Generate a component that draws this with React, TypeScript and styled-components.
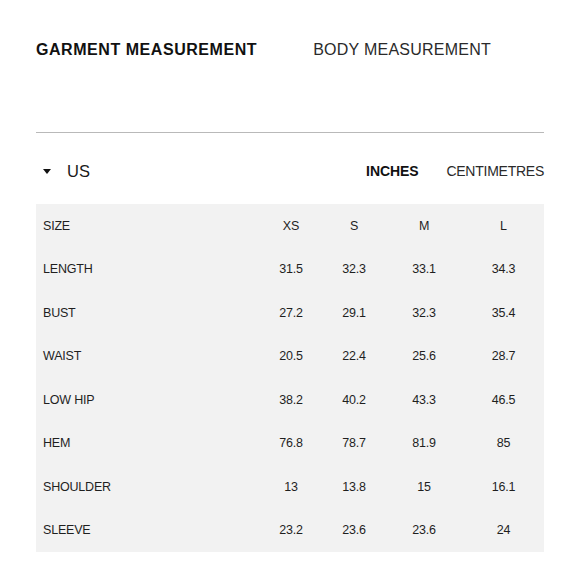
import { Fragment } from "react";
import styled, { createGlobalStyle } from "styled-components";

const GlobalStyle = createGlobalStyle`
  body {
    margin: 0;
    background: #ffffff;
    font-family: "Liberation Sans", Arial, sans-serif;
    color: #111111;
  }
`;

// size chart data (inches)
const SIZES = ["XS", "S", "M", "L"];

const ROWS: { label: string; values: string[] }[] = [
  { label: "LENGTH", values: ["31.5", "32.3", "33.1", "34.3"] },
  { label: "BUST", values: ["27.2", "29.1", "32.3", "35.4"] },
  { label: "WAIST", values: ["20.5", "22.4", "25.6", "28.7"] },
  { label: "LOW HIP", values: ["38.2", "40.2", "43.3", "46.5"] },
  { label: "HEM", values: ["76.8", "78.7", "81.9", "85"] },
  { label: "SHOULDER", values: ["13", "13.8", "15", "16.1"] },
  { label: "SLEEVE", values: ["23.2", "23.6", "23.6", "24"] },
];

interface ActiveProps {
  $active?: boolean;
}

const Page = styled.div`
  width: 508px;
  padding: 40px 36px 0;
`;

const Tabs = styled.div`
  display: flex;
  gap: 56px;
  height: 20px;
  align-items: center;
  padding-bottom: 72px;
  border-bottom: 1.5px solid #b9b9b9;
`;

const Tab = styled.span<ActiveProps>`
  font-size: 16px;
  line-height: 20px;
  font-weight: ${(p) => (p.$active ? 700 : 400)};
  letter-spacing: ${(p) => (p.$active ? "0.55px" : "0.25px")};
  color: ${(p) => (p.$active ? "#111" : "#2a2a2a")};
  white-space: nowrap;
`;

const UnitBar = styled.div`
  display: flex;
  align-items: center;
  justify-content: space-between;
  height: 20px;
  margin-top: 28px;
  margin-bottom: 23px;
`;

const Region = styled.div`
  display: flex;
  align-items: center;
  padding-left: 7px;
  gap: 16px;
`;

const Caret = styled.span`
  width: 0;
  height: 0;
  border-left: 4px solid transparent;
  border-right: 4px solid transparent;
  border-top: 5px solid #111;
`;

const RegionName = styled.span`
  font-size: 16.5px;
  color: #1a1a1a;
`;

const Units = styled.div`
  display: flex;
  gap: 28px;
`;

const Unit = styled.span<ActiveProps>`
  font-size: 14px;
  font-weight: ${(p) => (p.$active ? 700 : 400)};
  color: ${(p) => (p.$active ? "#111" : "#2a2a2a")};
  letter-spacing: ${(p) => (p.$active ? "-0.1px" : "-0.25px")};
`;

const Table = styled.div`
  background: #f2f2f2;
  display: grid;
  grid-template-columns: 223px 64px 62px 78px 81px;
  grid-auto-rows: 43.5px;
`;

const Cell = styled.div<{ $label?: boolean }>`
  display: flex;
  align-items: center;
  justify-content: ${(p) => (p.$label ? "flex-start" : "center")};
  padding-left: ${(p) => (p.$label ? "7px" : "0")};
  font-size: 12.5px;
  color: #1f1f1f;
  letter-spacing: -0.2px;
`;

export default function App() {
  return (
    <>
      <GlobalStyle />
      <Page>
        <Tabs>
          <Tab $active>GARMENT MEASUREMENT</Tab>
          <Tab>BODY MEASUREMENT</Tab>
        </Tabs>
        <UnitBar>
          <Region>
            <Caret />
            <RegionName>US</RegionName>
          </Region>
          <Units>
            <Unit $active>INCHES</Unit>
            <Unit>CENTIMETRES</Unit>
          </Units>
        </UnitBar>
        <Table>
          <Cell $label>SIZE</Cell>
          {SIZES.map((s) => (
            <Cell key={s}>{s}</Cell>
          ))}
          {ROWS.map((row) => (
            <Fragment key={row.label}>
              <Cell $label>{row.label}</Cell>
              {row.values.map((v, i) => (
                <Cell key={i}>{v}</Cell>
              ))}
            </Fragment>
          ))}
        </Table>
      </Page>
    </>
  );
}
